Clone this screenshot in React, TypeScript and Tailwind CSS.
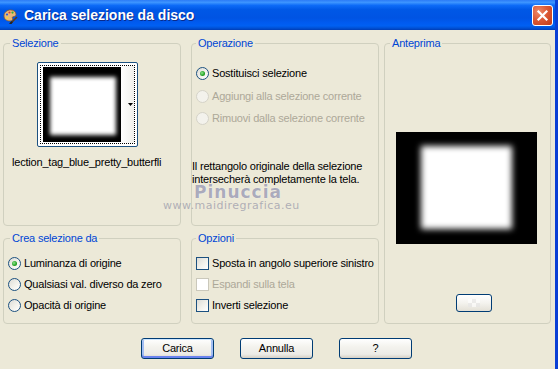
import React from "react";

function Radio({ checked, disabled, label }: { checked?: boolean; disabled?: boolean; label: string }) {
  return (
    <div className="flex items-center h-[13px] whitespace-nowrap">
      <span
        className={`w-[13px] h-[13px] rounded-full border flex items-center justify-center shrink-0 ${
          disabled
            ? "border-[#D5D3C8] bg-[#F3F2EC]"
            : "border-[#1C5180] bg-[linear-gradient(135deg,#DCDCD7_0%,#F3F2EC_55%,#FFFFFF_100%)]"
        }`}
      >
        {checked && <span className="w-[5px] h-[5px] rounded-full bg-[radial-gradient(circle_at_40%_40%,#8EE58E_0%,#21A121_60%,#178017_100%)]" />}
      </span>
      <span className={`ml-[3px] ${disabled ? "text-[#ACA899]" : "text-black"}`}>{label}</span>
    </div>
  );
}

function Check({ disabled, label }: { disabled?: boolean; label: string }) {
  return (
    <div className="flex items-center h-[13px] whitespace-nowrap">
      <span
        className={`w-[13px] h-[13px] border shrink-0 ${
          disabled
            ? "border-[#CAC8BB] bg-white"
            : "border-[#1C5180] bg-[linear-gradient(135deg,#DCDCD7_0%,#F3F2EC_55%,#FFFFFF_100%)]"
        }`}
      />
      <span className={`ml-[3px] ${disabled ? "text-[#ACA899]" : "text-black"}`}>{label}</span>
    </div>
  );
}

function Button({ label, isDefault }: { label: string; isDefault?: boolean }) {
  return (
    <div
      className={`w-[73px] h-[21px] rounded-[3px] border border-[#003C74] flex items-center justify-center text-black bg-[linear-gradient(to_bottom,#FFFFFF_0%,#F4F3EE_40%,#ECEBE6_80%,#D6D0C5_100%)] ${
        isDefault ? "shadow-[inset_0_1px_0_#CEE7FF,inset_0_-2px_0_#6982EE,inset_2px_0_0_#A3BEF3,inset_-2px_0_0_#A3BEF3]" : ""
      }`}
    >
      {label}
    </div>
  );
}

function PaletteIcon() {
  return (
    <svg width="16" height="16" viewBox="0 0 16 16">
      <path d="M2 8c0-3.5 3-6 6.5-6S14 4 14 6.5c0 1.5-1.5 2-2.5 2s-1.5.8-1 1.8c.6 1.2-.3 2.7-2.5 2.7C4.5 13 2 11 2 8z" fill="#E8B878" stroke="#8A5A2A" strokeWidth="0.8" />
      <circle cx="5" cy="6.5" r="1.1" fill="#2a5adf" />
      <circle cx="7.5" cy="4.5" r="1.1" fill="#e23b2b" />
      <circle cx="10.5" cy="4.6" r="1.1" fill="#2fae3a" />
      <circle cx="5.2" cy="9.8" r="1.1" fill="#f2d23a" />
      <path d="M14.5 9.5L9 15" stroke="#5a3a1a" strokeWidth="1.6" strokeLinecap="round" />
      <path d="M9.6 14.4l-1.2 1.2" stroke="#222" strokeWidth="2" strokeLinecap="round" />
    </svg>
  );
}

export default function App() {
  return (
    <div className="w-[558px] h-[369px] overflow-hidden bg-[#ECE9D8] flex flex-col border-r-[3px] border-[#0A3FD5] text-[11px] leading-[13px] tracking-[-0.2px] font-['Liberation_Sans',Arial,sans-serif] text-black">
      {/* title bar */}
      <div className="h-[30px] shrink-0 flex items-center bg-[linear-gradient(to_bottom,#2C7BF6_0%,#3D95FF_8%,#0D6BF7_18%,#0058E6_32%,#0054E3_60%,#005BF0_76%,#0060F2_86%,#0050D4_94%,#003DB5_100%)]">
        <div className="ml-[2px] mt-[1px]">
          <PaletteIcon />
        </div>
        <div className="ml-[6px] text-white font-bold text-[14px] leading-[16px] tracking-normal [text-shadow:1px_1px_0_#0A2A8A]">
          Carica selezione da disco
        </div>
        <div className="ml-auto mr-[2px] w-[21px] h-[21px] rounded-[3px] border border-white flex items-center justify-center bg-[radial-gradient(circle_at_30%_30%,#EE8B6A_0%,#DC5A36_45%,#C23A17_100%)]">
          <svg width="13" height="13" viewBox="0 0 13 13">
            <path d="M2.5 2.5L10.5 10.5M10.5 2.5L2.5 10.5" stroke="white" strokeWidth="2.2" strokeLinecap="square" />
          </svg>
        </div>
      </div>

      {/* body */}
      <div className="relative flex-1 flex flex-col pt-[7px] pl-[3px]">
        <div className="flex">
          {/* left column */}
          <div className="flex flex-col w-[178px] shrink-0">
            <fieldset className="h-[189px] border border-[#D0D0BF] rounded-[4px]">
              <legend className="ml-[6px] px-[2px] text-[#0046D5]">Selezione</legend>
              <div className="mt-[12px] ml-[33px] w-[101px] h-[85px] rounded-[2px] border border-[#1C5180] bg-white p-[2px]">
                <div className="w-full h-full border border-dotted border-black flex">
                  <div className="w-[78px] ml-[2px] my-[1px] bg-black pl-[7px] pr-[5px] pt-[10px] pb-[7px] overflow-hidden">
                    <div className="w-full h-full bg-white blur-[2px]" />
                  </div>
                  <div className="flex-1 flex items-center justify-end pr-[1px] bg-[linear-gradient(to_right,#FFFFFF,#F0F0EC)]">
                    <svg width="5" height="3" viewBox="0 0 5 3">
                      <path d="M0 0h5L2.5 3z" fill="black" />
                    </svg>
                  </div>
                </div>
              </div>
              <div className="mt-[9px] ml-[8px] whitespace-nowrap overflow-hidden">lection_tag_blue_pretty_butterfli</div>
            </fieldset>
            <fieldset className="mt-[6px] h-[92px] border border-[#D0D0BF] rounded-[4px]">
              <legend className="ml-[6px] px-[2px] text-[#0046D5]">Crea selezione da</legend>
              <div className="ml-[4px] mt-[12px] flex flex-col gap-[8px]">
                <Radio checked label="Luminanza di origine" />
                <Radio label="Qualsiasi val. diverso da zero" />
                <Radio label="Opacità di origine" />
              </div>
            </fieldset>
          </div>

          {/* middle column */}
          <div className="flex flex-col w-[188px] ml-[10px] shrink-0">
            <fieldset className="h-[189px] border border-[#D0D0BF] rounded-[4px]">
              <legend className="ml-[4px] px-[2px] text-[#0046D5]">Operazione</legend>
              <div className="ml-[4px] mt-[17px]">
                <Radio checked label="Sostituisci selezione" />
              </div>
              <div className="ml-[4px] mt-[10px]">
                <Radio disabled label="Aggiungi alla selezione corrente" />
              </div>
              <div className="ml-[4px] mt-[9px]">
                <Radio disabled label="Rimuovi dalla selezione corrente" />
              </div>
              <div className="mt-[35px] whitespace-nowrap">
                Il rettangolo originale della selezione
                <br />
                intersecherà completamente la tela.
              </div>
            </fieldset>
            <fieldset className="mt-[6px] h-[92px] border border-[#D0D0BF] rounded-[4px]">
              <legend className="ml-[4px] px-[2px] text-[#0046D5]">Opzioni</legend>
              <div className="ml-[4px] mt-[12px] flex flex-col gap-[8px]">
                <Check label="Sposta in angolo superiore sinistro" />
                <Check disabled label="Espandi sulla tela" />
                <Check label="Inverti selezione" />
              </div>
            </fieldset>
          </div>

          {/* right column */}
          <fieldset className="ml-[5px] w-[167px] h-[287px] shrink-0 border border-[#D0D0BF] rounded-[4px]">
            <legend className="ml-[5px] px-[2px] text-[#0046D5]">Anteprima</legend>
            <div className="mt-[82px] ml-[11px] w-[141px] h-[112px] bg-black pl-[25px] pr-[25px] pt-[14px] pb-[15px] overflow-hidden">
              <div className="w-full h-full bg-white blur-[3px]" />
            </div>
            <div className="mt-[50px] ml-[71px] w-[36px] h-[18px] rounded-[3px] border border-[#003C74] flex items-center justify-center bg-[linear-gradient(to_bottom,#FFFFFF_0%,#F4F3EE_50%,#E3E0D6_100%)]">
              <div className="grid grid-cols-3 w-[12px] h-[8px] opacity-60">
                <span className="bg-white" />
                <span className="bg-[#E6E6E6]" />
                <span className="bg-white" />
                <span className="bg-[#E6E6E6]" />
                <span className="bg-white" />
                <span className="bg-[#E6E6E6]" />
              </div>
            </div>
          </fieldset>
        </div>

        {/* buttons */}
        <div className="flex mt-[14px] ml-[138px] gap-[26px]">
          <Button label="Carica" isDefault />
          <Button label="Annulla" />
          <Button label="?" />
        </div>

        {/* watermark overlay */}
        <div className="absolute left-[194px] top-[155px] text-[17px] leading-[14px] font-bold tracking-[1px] text-[#8F8FA6]/75 [text-shadow:0_0_1px_#ffffff] font-['DejaVu_Sans',sans-serif] pointer-events-none">
          Pinuccia
        </div>
        <div className="absolute left-[163px] top-[169px] text-[11px] leading-[13px] tracking-[0.5px] text-[#9A9AAA]/75 font-['DejaVu_Sans',sans-serif] pointer-events-none">
          www.maidiregrafica.eu
        </div>
      </div>
    </div>
  );
}
